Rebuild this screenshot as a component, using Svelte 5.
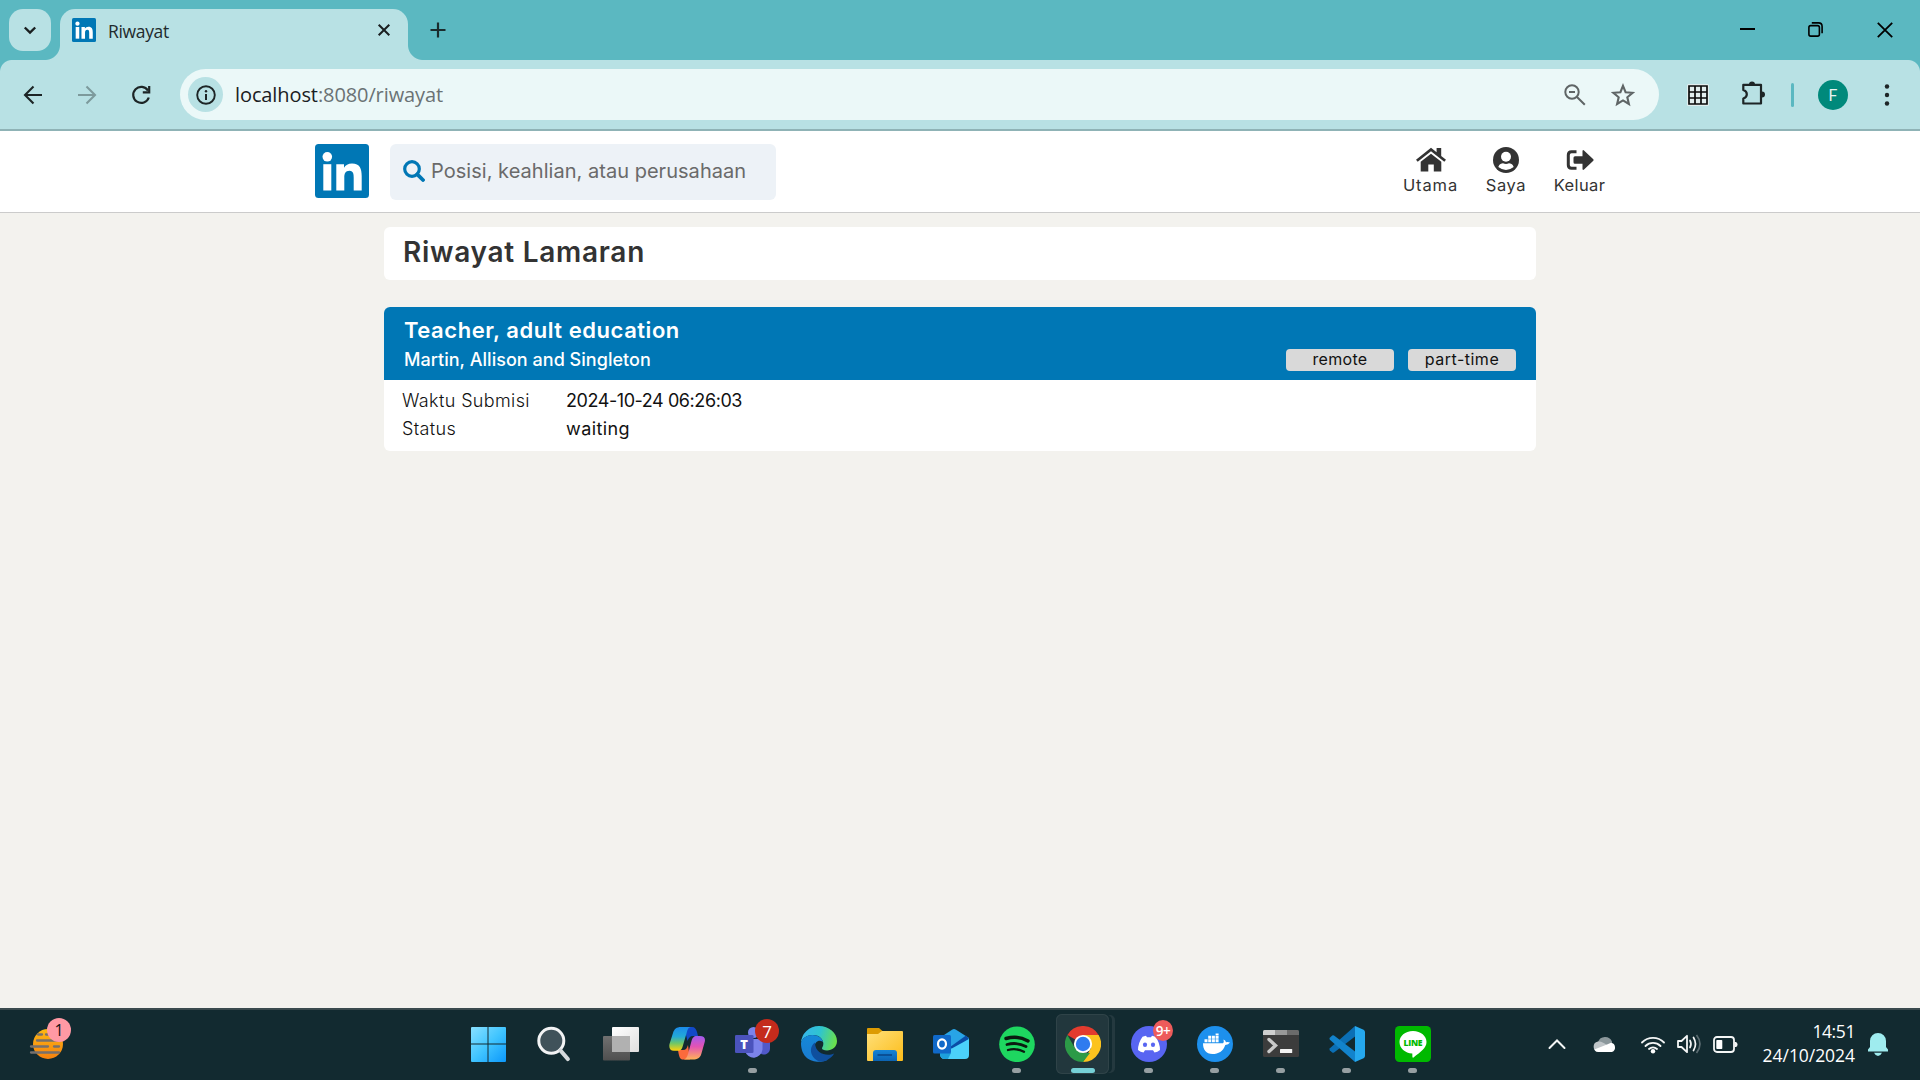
<script>
  const nav = [
    { id: 'home', label: 'Utama' },
    { id: 'user', label: 'Saya' },
    { id: 'exit', label: 'Keluar' }
  ];

  const rows = [
    { key: 'Waktu Submisi', value: '2024-10-24 06:26:03', kind: 'stamp' },
    { key: 'Status', value: 'waiting', kind: 'state' }
  ];

  const apps = [
    { id: 'start' },
    { id: 'find' },
    { id: 'taskview' },
    { id: 'copilot' },
    { id: 'teams', running: true, badge: '7', tone: 'red' },
    { id: 'edge' },
    { id: 'folder' },
    { id: 'outlook' },
    { id: 'spotify', running: true },
    { id: 'chrome', active: true },
    { id: 'discord', running: true, badge: '9+', tone: 'coral' },
    { id: 'docker', running: true },
    { id: 'terminal', running: true },
    { id: 'vscode', running: true },
    { id: 'line', running: true }
  ];
</script>

{#snippet linkedin(size)}
  <svg width={size} height={size} viewBox="0 0 54 54">
    <rect width="54" height="54" rx="3.5" fill="#0077b5" />
    <circle cx="12.3" cy="12.8" r="4.8" fill="#fff" />
    <rect x="8.3" y="20.2" width="8" height="26.3" fill="#fff" />
    <path
      d="M21.3 20.2H29V23.8C30.4 21.2 33.2 19.5 37 19.5C45 19.5 46.7 24.8 46.7 32V46.5H38.7V33.7C38.7 30.6 38.6 26.7 34.5 26.7C30.2 26.7 29.3 30 29.3 33.5V46.5H21.3Z"
      fill="#fff"
    />
  </svg>
{/snippet}

{#snippet appIcon(id)}
  <svg width="36" height="36" viewBox="0 0 36 36">
    {#if id === 'start'}
      <defs>
        <linearGradient id="win" x1="0" y1="0" x2="36" y2="36" gradientUnits="userSpaceOnUse">
          <stop offset="0" stop-color="#8be1ff" /><stop offset=".5" stop-color="#41c5ff" /><stop offset="1" stop-color="#0a96fa" />
        </linearGradient>
      </defs>
      <path d="M1 1H16.500V17.500H0V2Q0 1 1 1ZM17.500 1H34Q35 1 35 2V17.500H17.500ZM0 18.500H16.500V36H1Q0 36 0 35ZM17.500 18.500H35V35Q35 36 34 36H17.500Z" fill="url(#win)" />
    {:else if id === 'find'}
      <circle cx="14.3" cy="14.8" r="12.5" fill="#40525a" stroke="#f2f3f4" stroke-width="3" />
      <path d="M23.5 24.5L30.8 33" stroke="#d6dadd" stroke-width="4.2" stroke-linecap="round" />
    {:else if id === 'taskview'}
      <defs>
        <linearGradient id="tv" x1="0" y1="0" x2="1" y2="1"><stop offset="0" stop-color="#fff" /><stop offset="1" stop-color="#dfdfdf" /></linearGradient>
        <linearGradient id="tvb" x1="0" y1="0" x2="0" y2="1"><stop offset="0" stop-color="#707070" /><stop offset="1" stop-color="#4f4f4f" /></linearGradient>
      </defs>
      <rect x="0" y="10" width="27" height="24.500" rx="1" fill="url(#tvb)" />
      <rect x="9" y="1" width="27" height="25" rx="1" fill="url(#tv)" />
      <path d="M9 10H27V26H9Z" fill="#b1b1b1" />
    {:else if id === 'copilot'}
      <defs>
        <linearGradient id="cp1" x1="0" y1="0" x2="0" y2="1"><stop offset="0" stop-color="#1b8bea" /><stop offset=".4" stop-color="#23a9d8" /><stop offset=".68" stop-color="#6cc66a" /><stop offset="1" stop-color="#ffd20a" /></linearGradient>
        <linearGradient id="cp2" x1="0" y1="0" x2="0" y2="1"><stop offset="0" stop-color="#a05bf0" /><stop offset=".45" stop-color="#e353b4" /><stop offset="1" stop-color="#ffb257" /></linearGradient>
      </defs>
      <path d="M15 1H23C26 1 27 3 28 6L29 10H24C21 10 19.500 12 18.500 15Z" fill="#1249c8" />
      <path d="M9 24H14C17 24 18 22 19 19L21 33.500H14C11 33.500 10.500 31 9.700 28Z" fill="#fb6a3c" />
      <path d="M12 1H22C19 1.500 18.500 4 17.600 7L13.800 20C13 23 12 24.700 9 24.700H5C1 24.700-.2 22 .5 18L4 7C5.200 3 7.500 1 12 1Z" fill="url(#cp1)" />
      <path d="M24 33.500H14C17 33.500 18 31 19 28L22.500 15C23.400 12 24.500 10 28 10H31C35 10 36.700 12 35.700 16L32.300 28C31 32 28.500 33.500 24 33.500Z" fill="url(#cp2)" />
    {:else if id === 'teams'}
      <circle cx="18.500" cy="6.500" r="5.500" fill="#7b83eb" />
      <path d="M25 13H35V22.500A6 6 0 0 1 25 27Z" fill="#5059c9" />
      <path d="M10 13H27.500V23.500A9 9.500 0 0 1 10 25Z" fill="#7b83eb" />
      <rect x="0" y="9" width="18.500" height="18" rx="1.300" fill="#4b53bc" />
      <text x="9.200" y="22.800" class="glyph" font-size="13" fill="#fff" text-anchor="middle">T</text>
    {:else if id === 'edge'}
      <defs>
        <linearGradient id="ed1" x1="0" y1=".3" x2="1" y2=".5"><stop offset="0" stop-color="#36b5ee" /><stop offset=".5" stop-color="#2fc4cf" /><stop offset="1" stop-color="#6be04a" /></linearGradient>
        <linearGradient id="ed2" x1="0" y1="0" x2="0" y2="1"><stop offset="0" stop-color="#1588d8" /><stop offset="1" stop-color="#1a7bd0" /></linearGradient>
      </defs>
      <path d="M0 17A18 17.500 0 0 1 18 0C28 0 36 7 36 15C36 21 31 24.500 26 24.500C22 24.500 20 23 21.500 21C24 17 21 9 12 9C6 9 1 12 0 17Z" fill="url(#ed1)" />
      <path d="M0 17C1 12 6 9 11.500 9C17 9 21 12 22 16C18 13 13.500 16 13.500 21C13.500 29 20 34 26 34C18 38 0 36.500 0 17Z" fill="url(#ed2)" />
      <path d="M14 16.500C9 20 8.500 27 13 32C17 36.500 23 36.500 27 33.500C30 31.500 32.500 29.500 33 27.500C27 30.500 14 28.500 14 16.500Z" fill="#0f4f9e" />
    {:else if id === 'folder'}
      <defs>
        <linearGradient id="fo" x1="0" y1="0" x2="1" y2="1"><stop offset="0" stop-color="#ffe07a" /><stop offset="1" stop-color="#fcbc19" /></linearGradient>
        <linearGradient id="fob" x1="0" y1="0" x2="0" y2="1"><stop offset="0" stop-color="#1583d6" /><stop offset="1" stop-color="#0c63b2" /></linearGradient>
      </defs>
      <path d="M0 3Q0 2 1 2H12L15.500 5V12H0Z" fill="#dc9b03" />
      <path d="M0 8H11L15 5H35Q36 5 36 6V34Q36 35 35 35H1Q0 35 0 34Z" fill="url(#fo)" />
      <path d="M6 35V27Q6 24 9 24H27Q30 24 30 27V35Z" fill="url(#fob)" />
      <path d="M10.500 29H25" stroke="#0a4789" stroke-width="1.600" />
    {:else if id === 'outlook'}
      <path d="M8 11L19 3.700Q21 2.500 23 3.700L36 12V20L16 31Z" fill="#28a4e6" />
      <path d="M17 21L33 9.500L36 13L20 24Z" fill="#0a4ca6" />
      <path d="M16 24L36 13V29Q36 33 32 33H12Q7 33 7 28Z" fill="#4bd1fa" />
      <path d="M7 27L18 27L15 33H12Q7 33 7 28Z" fill="#1da0dc" />
      <rect x="0" y="9" width="18" height="18.500" rx="1.500" fill="#1069c9" />
      <ellipse cx="9" cy="18" rx="4" ry="4.600" fill="none" stroke="#fff" stroke-width="2.200" />
    {:else if id === 'spotify'}
      <circle cx="18" cy="18.300" r="17.800" fill="#1ed760" />
      <path d="M7 12.500Q19 9 29 15" stroke="#0b1a10" stroke-width="3.400" fill="none" stroke-linecap="round" />
      <path d="M8 18.500Q18 15.700 27 20.600" stroke="#0b1a10" stroke-width="2.800" fill="none" stroke-linecap="round" />
      <path d="M9 24Q17.500 21.700 25 25.800" stroke="#0b1a10" stroke-width="2.300" fill="none" stroke-linecap="round" />
    {:else if id === 'chrome'}
      <path d="M18 18L2.400 9A18 18 0 0 1 33.600 9Z" fill="#e33b2e" />
      <path d="M18 9H33.600A18 18 0 0 1 18 36L26 22Z" fill="#fcc31e" />
      <path d="M2.400 9L10.200 22.500L18 27H25L18 36A18 18 0 0 1 2.400 9Z" fill="#2c9a47" />
      <circle cx="18" cy="18" r="9.100" fill="#fff" />
      <circle cx="18" cy="18" r="7.200" fill="#2f7bef" />
    {:else if id === 'discord'}
      <circle cx="18" cy="18" r="18" fill="#5865f2" />
      <path d="M11.500 10.700Q13 10 15 9.700L16 11.300H20L21 9.700Q23 10 24.500 10.700Q29 17 29 24Q26.500 26 23.500 26.500L22 24.200H14L12.500 26.500Q9.500 26 7 24Q7 17 11.500 10.700Z" fill="#fff" />
      <ellipse cx="14" cy="18.800" rx="2.100" ry="2.300" fill="#5865f2" />
      <ellipse cx="22" cy="18.800" rx="2.100" ry="2.300" fill="#5865f2" />
    {:else if id === 'docker'}
      <circle cx="18" cy="18" r="18" fill="#1d90ed" />
      <path d="M6 17.300H26Q27.300 16 26.500 13.500Q28.500 14.300 29 16.300Q31 15.800 33 16.600Q31.500 19 28.300 19C26 25.500 21.500 28 15.500 28C9 28 6 24 6 17.300Z" fill="#fff" />
      <path d="M7.500 13.300h3v3h-3zM11.200 13.300h3v3h-3zM14.900 13.300h3v3h-3zM18.600 13.300h3v3h-3zM11.200 9.800h3v3h-3zM14.900 9.800h3v3h-3zM18.600 9.800h3v3h-3zM18.600 7.500h3v1.800h-3z" fill="#fff" />
    {:else if id === 'terminal'}
      <rect x="0" y="4" width="36" height="27" rx="1.500" fill="#3c3c3c" />
      <path d="M1.500 4H12V9H0V5.500Q0 4 1.500 4Z" fill="#cfcfcf" />
      <rect x="12" y="4" width="12" height="5" fill="#999" />
      <path d="M24 4H34.500Q36 4 36 5.500V9H24Z" fill="#6b6b6b" />
      <path d="M6 13.500L12.500 19.500L6 25.500" stroke="#c9c9c9" stroke-width="3.400" fill="none" stroke-linecap="round" />
      <rect x="17" y="23" width="12.200" height="4" rx=".5" fill="#f3f3f3" />
    {:else if id === 'vscode'}
      <path d="M26 0V10.500L5 26.500Q4 27 3.200 26.400L.8 24.200Q0 23.300 .9 22.300Z" fill="#0b6fb5" />
      <path d="M26 36V25.500L5 9.500Q4 9 3.200 9.600L.8 11.800Q0 12.700 .9 13.700Z" fill="#1283cc" />
      <path d="M26 0L34.600 3.800Q36 4.500 36 6V30Q36 31.500 34.600 32.200L26 36Z" fill="#25a8ee" />
    {:else if id === 'line'}
      <rect width="36" height="36" rx="4.500" fill="#00b900" />
      <path d="M18 5C26 5 31.500 10 31.500 16C31.500 22 26 25.500 18.500 31.500C17 32.500 17.500 30 17.300 27.500C10 27 4.500 22.500 4.500 16C4.500 10 10 5 18 5Z" fill="#fff" />
      <text x="18" y="20" class="glyph" font-size="8.600" fill="#00b900" text-anchor="middle" textLength="19">LINE</text>
    {/if}
  </svg>
{/snippet}

<div class="screen">
  <div class="tabstrip">
    <div class="tab-search">
      <svg width="14" height="9" viewBox="0 0 14 9"><path d="M1.800 1.500L7 6.500L12.200 1.500" fill="none" stroke="#1a1f20" stroke-width="2.400" /></svg>
    </div>
    <div class="tab">
      {@render linkedin(24)}
      <span class="tab-title">Riwayat</span>
      <svg width="14" height="14" viewBox="0 0 14 14"><path d="M1.700 1.700L12.300 12.300M12.300 1.700L1.700 12.300" stroke="#1a1f20" stroke-width="2" /></svg>
    </div>
    <svg class="new-tab" width="16" height="16" viewBox="0 0 16 16"><path d="M8 .5V15.500M.5 8H15.500" stroke="#1a2b2d" stroke-width="2.200" /></svg>
    <div class="window-controls">
      <svg width="15" height="15" viewBox="0 0 15 15"><path d="M0 7H15" stroke="#000" stroke-width="2" /></svg>
      <svg width="15" height="15" viewBox="0 0 15 15"><rect x=".9" y="3.600" width="10.500" height="10.500" rx="1.800" fill="none" stroke="#000" stroke-width="1.600" /><path d="M3.800 .9H10.500Q14.100 .9 14.100 4.500V11.200" fill="none" stroke="#000" stroke-width="1.600" /></svg>
      <svg width="16" height="16" viewBox="0 0 16 16"><path d="M.8 .8L15.200 15.200M15.200 .8L.8 15.200" stroke="#000" stroke-width="1.800" /></svg>
    </div>
  </div>

  <div class="toolbar">
    <div class="history">
      <svg width="20" height="20" viewBox="0 0 20 20"><path d="M19 10H3M10.500 1.500L2 10L10.500 18.500" fill="none" stroke="#1d2526" stroke-width="2.100" /></svg>
      <svg width="20" height="20" viewBox="0 0 20 20"><path d="M1 10H17M9.500 1.500L18 10L9.500 18.500" fill="none" stroke="#7d9a9c" stroke-width="2.100" /></svg>
      <svg width="20" height="20" viewBox="0 0 20 20"><path d="M17.800 12.500A8 8 0 1 1 17 5.600" fill="none" stroke="#1d2526" stroke-width="2.200" /><path d="M18.200 1V7.300H11.800" fill="none" stroke="#1d2526" stroke-width="2.200" /></svg>
    </div>
    <div class="omnibox">
      <div class="site-info">
        <svg width="20" height="20" viewBox="0 0 20 20"><circle cx="10" cy="10" r="8.800" fill="none" stroke="#1d2526" stroke-width="1.900" /><path d="M10 9V15" stroke="#1d2526" stroke-width="2" /><circle cx="10" cy="6.200" r="1.200" fill="#1d2526" /></svg>
      </div>
      <span class="url"><b>localhost</b>:8080/riwayat</span>
      <svg width="22" height="22" viewBox="0 0 22 22"><circle cx="8" cy="8" r="6.700" fill="none" stroke="#5f6566" stroke-width="2" /><path d="M13 13L20.800 20.800M5 8H11" stroke="#5f6566" stroke-width="2" /></svg>
      <svg class="star" width="24" height="24" viewBox="0 0 24 24"><path d="M12 2.800L14.600 9.200L21.600 9.800L16.300 14.300L17.900 21L12 17.400L6.100 21L7.700 14.300L2.400 9.800L9.400 9.200Z" fill="none" stroke="#5f6566" stroke-width="2.100" /></svg>
    </div>
    <svg class="grid-icon" width="22" height="22" viewBox="0 0 22 22"><rect width="22" height="22" rx="1.500" fill="#e2eeee" /><path d="M2 2H20V20H2ZM8 2V20M14 2V20M2 8H20M2 14H20" fill="none" stroke="#0b0b0b" stroke-width="1.700" /></svg>
    <svg class="puzzle" width="25" height="25" viewBox="0 0 25 25"><path d="M2.300 3.800H20V9.500V18V22.500H2.300V17.500C7 16 7 10.500 2.300 9Z" fill="none" stroke="#1d2526" stroke-width="2.200" stroke-linejoin="round" /><path d="M8 3.500A3 3 0 0 1 14 3.500ZM21 10.500A3 3 0 0 1 21 16.500Z" fill="#1d2526" /></svg>
    <div class="divider"></div>
    <div class="avatar">F</div>
    <svg class="kebab" width="6" height="22" viewBox="0 0 6 22"><circle cx="3" cy="2.500" r="2.200" fill="#1d2526" /><circle cx="3" cy="11" r="2.200" fill="#1d2526" /><circle cx="3" cy="19.500" r="2.200" fill="#1d2526" /></svg>
  </div>

  <header class="site-header">
    {@render linkedin(54)}
    <div class="search">
      <svg width="22" height="22" viewBox="0 0 22 22"><circle cx="9" cy="9" r="7.300" fill="none" stroke="#0077b5" stroke-width="3.200" /><path d="M14.300 14.300L20 20" stroke="#0077b5" stroke-width="3.800" stroke-linecap="round" /></svg>
      <span>Posisi, keahlian, atau perusahaan</span>
    </div>
    <nav>
      {#each nav as item}
        <div class="nav-item {item.id}">
          <svg width="30" height="26" viewBox="0 0 30 26">
            {#if item.id === 'home'}
              <path d="M15 .8L20.600 5.300V1H25.200V9L30 12.800L28.300 14.800L15 4.300L1.700 14.800L0 12.800Z" fill="#333" />
              <path d="M15 6.700L25.300 14.800V24.500H17.800V17.500H12.300V24.500H4.700V14.800Z" fill="#333" />
            {:else if item.id === 'user'}
              <circle cx="15" cy="13" r="13" fill="#333" />
              <circle cx="15" cy="9.800" r="5" fill="#fff" />
              <path d="M7.300 20C8.300 17 10.500 16.300 12 16.300Q15 17.500 18 16.300C19.500 16.300 21.700 17 22.700 20Q15 26 7.300 20Z" fill="#fff" />
            {:else}
              <path d="M11.500 4.800H6.500Q3.300 4.800 3.300 8V18Q3.300 21.300 6.500 21.300H11.500" fill="none" stroke="#333" stroke-width="3" />
              <path d="M10 9.300Q8.500 9.300 8.500 10.800V15.200Q8.500 16.700 10 16.700H17.500V22Q17.800 23.500 19 22.500L28.300 13.700Q29 13 28.300 12.300L19 3.500Q17.800 2.500 17.500 4V9.300Z" fill="#333" />
            {/if}
          </svg>
          <span>{item.label}</span>
        </div>
      {/each}
    </nav>
  </header>

  <main>
    <h1>Riwayat Lamaran</h1>
    <article>
      <div class="job-head">
        <div class="job">
          <h2>Teacher, adult education</h2>
          <p class="company">Martin, Allison and Singleton</p>
        </div>
        <div class="pills">
          <span class="pill remote">remote</span>
          <span class="pill part">part-time</span>
        </div>
      </div>
      <dl>
        {#each rows as row}
          <div class="row">
            <dt>{row.key}</dt>
            <dd class={row.kind}>{row.value}</dd>
          </div>
        {/each}
      </dl>
    </article>
  </main>

  <footer class="taskbar">
    <div class="widget">
      <svg width="34" height="32" viewBox="0 0 34 32">
        <defs><linearGradient id="sun" x1="0" y1="0" x2="0" y2="1"><stop offset="0" stop-color="#fdb813" /><stop offset="1" stop-color="#f5810f" /></linearGradient></defs>
        <circle cx="19" cy="16" r="15" fill="url(#sun)" />
        <path d="M9 6.500H13M17 6.500H22M8 12.500H31M2 18.500H19M25 18.500H30M2 24.500H30" stroke="#77706c" stroke-width="2.300" stroke-linecap="round" />
      </svg>
      <span class="badge pink">1</span>
    </div>
    <div class="apps">
      {#each apps as app}
        <div class="app" class:active={app.active}>
          {@render appIcon(app.id)}
          {#if app.badge}<span class="badge {app.tone}">{app.badge}</span>{/if}
          <i class:running={app.running}></i>
        </div>
      {/each}
    </div>
    <div class="tray">
      <svg width="18" height="12" viewBox="0 0 18 12"><path d="M1.500 10L9 2.500L16.500 10" fill="none" stroke="#f4f6f6" stroke-width="2" stroke-linecap="round" /></svg>
      <svg class="cloud" width="24" height="17" viewBox="0 0 24 17"><path d="M5 6A7.500 7.500 0 0 1 19 5.500L19 10H5Z" fill="#8b979b" /><path d="M5.500 16A5.300 5.300 0 0 1 5 5.500C8 5 10 6.500 14 9L18 12L14 16Z" fill="#bfc5c8" /><path d="M1.300 13.500L14 8.500L18 6.800A4.800 4.800 0 0 1 19 16H5.500Q2.500 16 1.300 13.500Z" fill="#fff" /></svg>
      <svg class="wifi" width="24" height="19" viewBox="0 0 24 19"><path d="M1 7.500A15.500 15.500 0 0 1 23 7.500M4.500 11A10.700 10.700 0 0 1 19.500 11M8 14A6 6 0 0 1 16 14" fill="none" stroke="#f4f6f6" stroke-width="1.800" stroke-linecap="round" /><circle cx="12" cy="16.300" r="2.200" fill="#fff" /></svg>
      <svg class="sound" width="25" height="20" viewBox="0 0 25 20"><path d="M1 7H4.500L10 1.800V18.200L4.500 13H1Z" fill="none" stroke="#f4f6f6" stroke-width="1.800" stroke-linejoin="round" /><path d="M13 6.500Q15 10 13 13.500M16.500 3.500Q20.500 10 16.500 16.500" fill="none" stroke="#f4f6f6" stroke-width="1.700" stroke-linecap="round" /><path d="M19.500 1Q26.500 10 19.500 19" fill="none" stroke="#5b6c71" stroke-width="1.700" /></svg>
      <svg class="battery" width="25" height="17" viewBox="0 0 25 17"><rect x="1" y="1" width="20" height="15" rx="3" fill="none" stroke="#f4f6f6" stroke-width="1.800" /><rect x="3.300" y="4" width="6" height="9" rx=".8" fill="#fff" /><path d="M21.500 6H23Q24.500 6.500 24.500 8.500T23 11H21.500Z" fill="#f4f6f6" /></svg>
      <div class="clock"><span class="time">14:51</span><span>24/10/2024</span></div>
      <svg class="bell" width="20" height="23" viewBox="0 0 20 23"><path d="M0 18.500V16.500L2 14V8A8 8 0 0 1 18 8V14L20 16.500V18.500Z" fill="#9fecef" /><path d="M6 19.800H14Q12.500 23 10 23T6 19.800Z" fill="#9fecef" /></svg>
    </div>
  </footer>
</div>

<style>
  :global(body) { margin: 0; overflow: hidden; }
  svg { display: block; flex: none; }
  h1, h2, p, dl, dd { margin: 0; }
  .screen { width: 1920px; height: 1080px; display: flex; flex-direction: column; overflow: hidden; background: #f3f2ee; font-family: Inter, sans-serif; }
  .glyph { font-family: "Open Sans", sans-serif; font-weight: 800; }

  .tabstrip { height: 60px; flex: none; display: flex; background: #5bb8c1; font-family: "Open Sans", sans-serif; }
  .tab-search { width: 42px; height: 42px; margin: 9px 9px 0; border-radius: 14px; background: #b8e1e4; display: flex; align-items: center; justify-content: center; }
  .tab { position: relative; width: 348px; height: 51px; margin-top: 9px; padding: 0 17px 9px 12px; box-sizing: border-box; border-radius: 15px 15px 0 0; background: #b8e1e4; display: flex; align-items: center; }
  .tab::before, .tab::after { content: ""; position: absolute; bottom: 0; width: 15px; height: 15px; }
  .tab::before { left: -15px; background: radial-gradient(circle at 0 0, transparent 14.5px, #b8e1e4 15.5px); }
  .tab::after { right: -15px; background: radial-gradient(circle at 100% 0, transparent 14.5px, #b8e1e4 15.5px); }
  .tab-title { flex: 1; margin-left: 12px; padding-top: 2px; font-size: 17.5px; letter-spacing: -0.33px; color: #1f2b2d; }
  .new-tab { margin: 22px 0 0 22px; }
  .window-controls { margin-left: auto; display: flex; align-items: center; height: 59px; }
  .window-controls svg { margin: 0 27px; }
  .window-controls svg:first-child { margin-right: 26px; }
  .window-controls svg:last-child { margin-right: 27px; }

  .toolbar {
    height: 69px; flex: none; display: flex; align-items: center; border-bottom: 2px solid #8fb3b6; font-family: "Open Sans", sans-serif;
    background:
      radial-gradient(circle at 12px 12px, #b8e1e4 11.5px, #5bb8c1 12.5px) 0 0 / 12px 12px no-repeat,
      radial-gradient(circle at 0 12px, #b8e1e4 11.5px, #5bb8c1 12.5px) 100% 0 / 12px 12px no-repeat,
      #b8e1e4;
  }
  .history { display: flex; gap: 34px; margin-left: 23px; }
  .omnibox { width: 1479px; height: 51px; margin-left: 29px; border-radius: 26px; background: #ebf8f8; display: flex; align-items: center; padding: 0 24px 0 8px; box-sizing: border-box; }
  .site-info { width: 35px; height: 35px; border-radius: 50%; background: #b8e1e4; display: flex; align-items: center; justify-content: center; }
  .url { flex: 1; margin-left: 12px; font-size: 20px; letter-spacing: -0.1px; color: #6a7274; padding-bottom: 1px; }
  .url b { font-weight: 400; color: #1a2022; }
  .star { margin-left: 25px; }
  .grid-icon { margin-left: 28px; }
  .puzzle { margin: 0 0 3px 32px; }
  .divider { width: 3px; height: 24px; margin-left: 25px; border-radius: 2px; background: #5bb8c1; }
  .avatar { width: 30px; height: 30px; margin-left: 24px; border-radius: 50%; background: #00897b; color: #e8f5f3; font: 16px/31px Roboto, sans-serif; text-align: center; }
  .kebab { margin-left: 36px; }

  .site-header { height: 68px; flex: none; display: flex; align-items: flex-start; padding: 13px 315px 0; background: #fff; border-bottom: 1px solid #cbcbcb; }
  .search { width: 386px; height: 56px; margin-left: 21px; box-sizing: border-box; padding: 0 13px 3px; border-radius: 6px; background: #edf2f7; display: flex; align-items: center; gap: 6px; font-size: 20px; letter-spacing: 0.03px; color: #6a6a6a; white-space: nowrap; }
  nav { margin-left: auto; margin-top: 3px; display: flex; gap: 28px; color: #333; font-size: 16.5px; line-height: 20px; }
  .nav-item { display: flex; flex-direction: column; align-items: center; gap: 2px; }
  .home { width: 55px; letter-spacing: 0.9px; }
  .user { width: 40px; letter-spacing: 0.6px; }
  .exit { width: 51px; letter-spacing: 0.35px; }

  main { width: 1152px; flex: 1; margin: 0 auto; padding-top: 14px; }
  h1 { height: 53px; box-sizing: border-box; padding-left: 19px; border-radius: 6px; background: #fff; color: #333; font-size: 28px; line-height: 50px; font-weight: 600; letter-spacing: 0.72px; }
  article { margin-top: 27px; border-radius: 6px; overflow: hidden; background: #fff; }
  .job-head { height: 73px; box-sizing: border-box; padding: 8px 20px 9px; display: flex; justify-content: space-between; align-items: flex-end; background: #0077b5; color: #fff; }
  .job { align-self: flex-start; }
  h2 { font-size: 22px; line-height: 30px; font-weight: 600; letter-spacing: 0.54px; }
  .company { font-size: 18px; line-height: 30px; font-weight: 500; letter-spacing: 0.03px; }
  .pills { display: flex; gap: 14px; }
  .pill { width: 108px; height: 22px; border-radius: 4px; background: #d9d9d9; color: #111; font-size: 16px; line-height: 21px; text-align: center; }
  .remote { letter-spacing: 0.3px; }
  .part { letter-spacing: 0.5px; }
  dl { height: 71px; box-sizing: border-box; padding: 7px 18px 0; font-size: 18px; line-height: 28px; color: #111; }
  .row { display: flex; }
  dt { width: 164px; font-weight: 300; letter-spacing: 0.37px; }
  .stamp { letter-spacing: -0.43px; }
  .state { letter-spacing: 0.4px; }

  .taskbar { height: 70px; flex: none; display: flex; background: #122a30; border-top: 2px solid #3a4a4e; font-family: "Open Sans", sans-serif; }
  .widget { position: relative; width: 454px; padding: 18px 0 0 29px; box-sizing: border-box; }
  .apps { display: flex; padding-left: 8px; }
  .app { position: relative; width: 53px; height: 60px; margin: 4px 13px 0 0; display: flex; flex-direction: column; align-items: center; padding-top: 12px; box-sizing: border-box; border-radius: 6px; }
  .active { background: #22373d; box-shadow: inset 0 0 0 1px #2f4348, 4px 0 0 -1px #122a30, 7px 0 0 -1px #24393f; }
  .app i { width: 9px; height: 5px; margin-top: 6px; border-radius: 3px; background: transparent; }
  .app i.running { background: #969fa2; }
  .active i { width: 24px; background: #76d0d6; }
  .badge { position: absolute; border-radius: 50%; display: flex; align-items: center; justify-content: center; }
  .pink { left: 47px; top: 8px; width: 24px; height: 24px; background: #ff99a4; color: #111; font-size: 16px; }
  .red { left: 29px; top: 5px; width: 24px; height: 24px; background: #c42b1c; color: #fff; font-size: 17px; }
  .coral { left: 31px; top: 6px; width: 20px; height: 21px; background: #ed5b5b; color: #fff; font-size: 13.5px; font-weight: 600; letter-spacing: -0.5px; }
  .tray { margin-left: auto; display: flex; align-items: center; padding: 0 32px 2px 0; }
  .cloud { margin-left: 27px; }
  .wifi { margin-left: 24px; }
  .sound { margin-left: 12px; }
  .battery { margin-left: 11px; }
  .clock { width: 117px; padding-bottom: 2px; display: flex; flex-direction: column; align-items: flex-end; color: #fff; font-size: 17.5px; line-height: 24px; letter-spacing: -0.05px; }
  .time { letter-spacing: -0.4px; }
  .bell { margin: 1px 0 0 13px; }
</style>
